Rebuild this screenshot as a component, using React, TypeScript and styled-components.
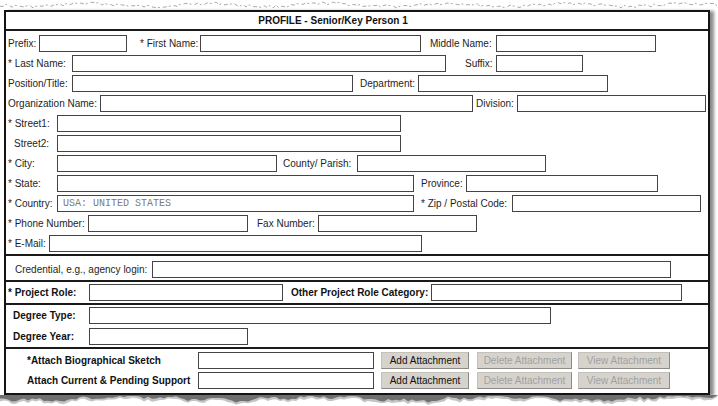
import React from "react";
import styled, { createGlobalStyle } from "styled-components";

const Global = createGlobalStyle`
  html, body { margin: 0; padding: 0; background: #ffffff; }
  body { font-family: "Liberation Sans", Arial, sans-serif; font-size: 10px; color: #1a1a1a; }
`;

const Page = styled.div`
  width: 718px;
  height: 406px;
  overflow: hidden;
  background: #ffffff;
  display: flex;
  flex-direction: column;
`;

const Tear = styled.svg`
  display: block;
  flex: none;
`;

const Sheet = styled.div`
  margin-left: 4px;
  width: 706px;
  box-sizing: border-box;
  border: 2px solid #141414;
  background: #ffffff;
  box-shadow: 4px 1px 3px rgba(0, 0, 0, 0.45);
  display: flex;
  flex-direction: column;
`;

const Header = styled.div`
  height: 17px;
  border-bottom: 2px solid #1a1a1a;
  display: flex;
  align-items: center;
  justify-content: center;
  padding-right: 48px;
  font-weight: bold;
  font-size: 10px;
  color: #111;
`;

const Section = styled.div<{ $pt: number; $pb: number; $gap: number; $last?: boolean }>`
  display: flex;
  flex-direction: column;
  padding-top: ${(p) => p.$pt}px;
  padding-bottom: ${(p) => p.$pb}px;
  gap: ${(p) => p.$gap}px;
  border-bottom: ${(p) => (p.$last ? "none" : "2px solid #1a1a1a")};
`;

const Row = styled.div`
  display: flex;
  align-items: center;
  height: 17px;
`;

const Label = styled.span<{ $w: number; $ml: number; $bold?: boolean }>`
  flex: none;
  width: ${(p) => p.$w}px;
  margin-left: ${(p) => p.$ml}px;
  line-height: 17px;
  white-space: nowrap;
  font-weight: ${(p) => (p.$bold ? "bold" : "normal")};
  color: ${(p) => (p.$bold ? "#111" : "#1e1e1e")};
`;

const TextBox = styled.input<{ $w: number }>`
  flex: none;
  width: ${(p) => p.$w}px;
  height: 17px;
  box-sizing: border-box;
  margin: 0;
  padding: 0 5px;
  border: 1px solid #444;
  background: #ffffff;
  outline: none;
  font-family: "Liberation Mono", "Courier New", monospace;
  font-size: 10px;
  color: #333;
  &::placeholder {
    color: #7c7c7c;
  }
`;

const Button = styled.button<{ $w: number; $ml: number }>`
  flex: none;
  width: ${(p) => p.$w}px;
  height: 17px;
  margin: 0 0 0 ${(p) => p.$ml}px;
  padding: 0;
  box-sizing: border-box;
  background: #d6d3cd;
  border: 1px solid;
  border-color: #c4c1bb #8d8b87 #8d8b87 #c4c1bb;
  font-family: "Liberation Sans", Arial, sans-serif;
  font-size: 10px;
  color: #111;
  &:disabled {
    color: #a2a19e;
  }
`;

type F = { ls: number; text: string; is: number; ie: number; bold?: boolean; ph?: string };

const fieldRows: F[][] = [
  [
    { ls: 8, text: "Prefix:", is: 39, ie: 126 },
    { ls: 140, text: "* First Name:", is: 200, ie: 420 },
    { ls: 430, text: "Middle Name:", is: 496, ie: 655 },
  ],
  [
    { ls: 8, text: "* Last Name:", is: 72, ie: 445 },
    { ls: 465, text: "Suffix:", is: 496, ie: 582 },
  ],
  [
    { ls: 8, text: "Position/Title:", is: 72, ie: 352 },
    { ls: 360, text: "Department:", is: 418, ie: 607 },
  ],
  [
    { ls: 8, text: "Organization Name:", is: 100, ie: 472 },
    { ls: 476, text: "Division:", is: 517, ie: 705 },
  ],
  [{ ls: 8, text: "* Street1:", is: 57, ie: 400 }],
  [{ ls: 14, text: "Street2:", is: 57, ie: 400 }],
  [
    { ls: 8, text: "* City:", is: 57, ie: 276 },
    { ls: 283, text: "County/ Parish:", is: 357, ie: 545 },
  ],
  [
    { ls: 8, text: "* State:", is: 57, ie: 413 },
    { ls: 421, text: "Province:", is: 466, ie: 657 },
  ],
  [
    { ls: 8, text: "* Country:", is: 57, ie: 413, ph: "USA: UNITED STATES" },
    { ls: 421, text: "* Zip / Postal Code:", is: 512, ie: 700 },
  ],
  [
    { ls: 8, text: "* Phone Number:", is: 88, ie: 247 },
    { ls: 257, text: "Fax Number:", is: 318, ie: 476 },
  ],
  [{ ls: 8, text: "* E-Mail:", is: 49, ie: 421 }],
];

const ORIGIN = 6;

function FieldRow({ fields }: { fields: F[] }) {
  let prev = ORIGIN;
  return (
    <Row>
      {fields.map((f, i) => {
        const ml = f.ls - prev;
        prev = f.ie + 1;
        return (
          <React.Fragment key={i}>
            <Label $w={f.is - f.ls} $ml={ml} $bold={f.bold}>
              {f.text}
            </Label>
            <TextBox $w={f.ie - f.is + 1} readOnly placeholder={f.ph} />
          </React.Fragment>
        );
      })}
    </Row>
  );
}

function AttachRow({ text }: { text: string }) {
  return (
    <Row>
      <Label $w={171} $ml={21} $bold>
        {text}
      </Label>
      <TextBox $w={176} readOnly />
      <Button $w={88} $ml={7}>Add Attachment</Button>
      <Button $w={95} $ml={8} disabled>
        Delete Attachment
      </Button>
      <Button $w={92} $ml={6} disabled>
        View Attachment
      </Button>
    </Row>
  );
}

// deterministic pseudo random
let seed = 17;
const rnd = () => {
  seed = (seed * 9301 + 49297) % 233280;
  return seed / 233280;
};

const topPts: string[] = [];
for (let x = 0; x <= 718; x += 3) {
  const y = 5 + 1.6 * Math.sin(x / 19) + (rnd() - 0.5) * 3;
  topPts.push(`${x},${y.toFixed(1)}`);
}

const botDark: string[] = [];
const botLight: string[] = [];
for (let x = 0; x <= 718; x += 4) {
  const base = 3.5 + 2 * Math.sin(x / 29) + 1.2 * Math.sin(x / 7.3);
  const y = Math.max(1, Math.min(9, base + (rnd() - 0.5) * 3));
  botDark.push(`L${x},${y.toFixed(1)}`);
  botLight.push(`L${x},${Math.min(11, y + 1.5 + rnd() * 1.5).toFixed(1)}`);
}
const darkPath = `M0,0 L718,0 ${botDark.slice().reverse().join(" ")} Z`;
const lightPath = `M0,0 L718,0 ${botLight.slice().reverse().join(" ")} Z`;

export default function App() {
  return (
    <Page>
      <Global />
      <Tear width={718} height={10} viewBox="0 0 718 10">
        <polyline
          points={topPts.join(" ")}
          fill="none"
          stroke="#a9a9a9"
          strokeWidth={1}
          strokeDasharray="4 2 2 3"
        />
      </Tear>
      <Sheet>
        <Header>PROFILE - Senior/Key Person 1</Header>
        <Section $pt={4} $pb={2} $gap={3}>
          {fieldRows.map((r, i) => (
            <FieldRow key={i} fields={r} />
          ))}
        </Section>
        <Section $pt={5} $pb={2} $gap={0}>
          <FieldRow fields={[{ ls: 15, text: "Credential, e.g., agency login:", is: 152, ie: 670 }]} />
        </Section>
        <Section $pt={2} $pb={2} $gap={0}>
          <FieldRow
            fields={[
              { ls: 8, text: "* Project Role:", is: 89, ie: 282, bold: true },
              { ls: 291, text: "Other Project Role Category:", is: 431, ie: 681, bold: true },
            ]}
          />
        </Section>
        <Section $pt={2} $pb={2} $gap={4}>
          <FieldRow fields={[{ ls: 13, text: "Degree Type:", is: 89, ie: 550, bold: true }]} />
          <FieldRow fields={[{ ls: 13, text: "Degree Year:", is: 89, ie: 247, bold: true }]} />
        </Section>
        <Section $pt={3} $pb={4} $gap={3} $last>
          <AttachRow text="*Attach Biographical Sketch" />
          <AttachRow text="Attach Current & Pending Support" />
        </Section>
      </Sheet>
      <Tear width={718} height={12} viewBox="0 0 718 12">
        <path d={lightPath} fill="#c4c4c4" />
        <path d={darkPath} fill="#6f6f6f" />
      </Tear>
    </Page>
  );
}
